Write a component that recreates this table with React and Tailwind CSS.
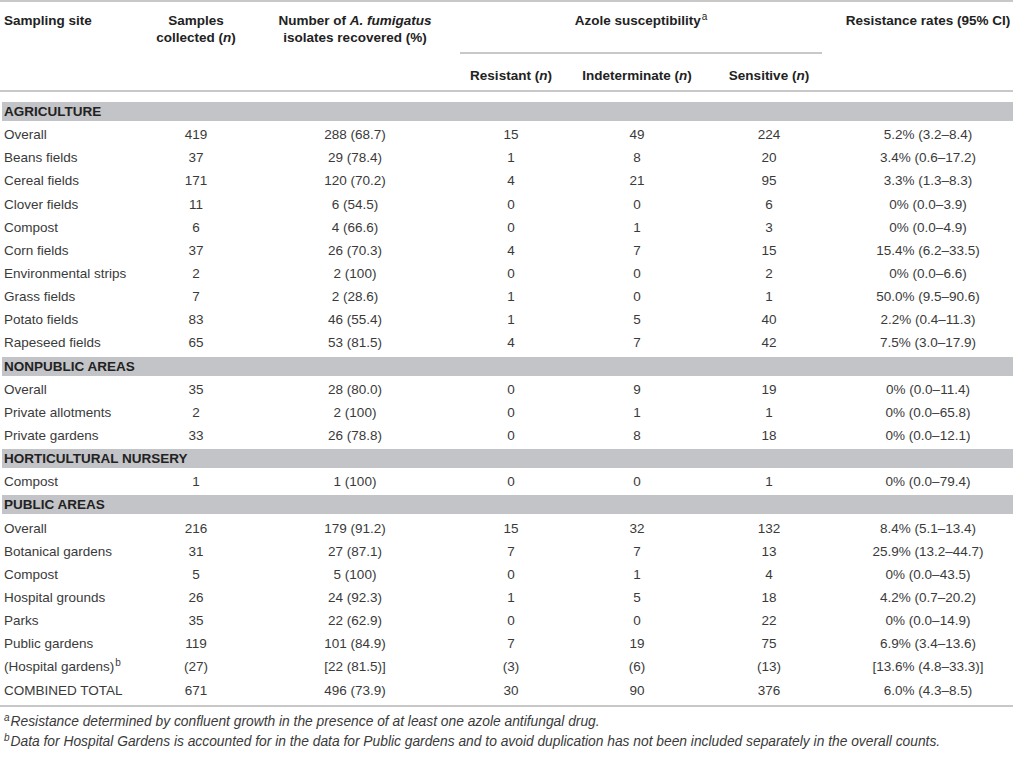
const COLS = 'grid grid-cols-[150px_92px_226px_86px_166px_98px_195px]';

const SECTIONS = [
  {
    title: 'AGRICULTURE',
    rows: [
      ['Overall', '419', '288 (68.7)', '15', '49', '224', '5.2% (3.2–8.4)'],
      ['Beans fields', '37', '29 (78.4)', '1', '8', '20', '3.4% (0.6–17.2)'],
      ['Cereal fields', '171', '120 (70.2)', '4', '21', '95', '3.3% (1.3–8.3)'],
      ['Clover fields', '11', '6 (54.5)', '0', '0', '6', '0% (0.0–3.9)'],
      ['Compost', '6', '4 (66.6)', '0', '1', '3', '0% (0.0–4.9)'],
      ['Corn fields', '37', '26 (70.3)', '4', '7', '15', '15.4% (6.2–33.5)'],
      ['Environmental strips', '2', '2 (100)', '0', '0', '2', '0% (0.0–6.6)'],
      ['Grass fields', '7', '2 (28.6)', '1', '0', '1', '50.0% (9.5–90.6)'],
      ['Potato fields', '83', '46 (55.4)', '1', '5', '40', '2.2% (0.4–11.3)'],
      ['Rapeseed fields', '65', '53 (81.5)', '4', '7', '42', '7.5% (3.0–17.9)'],
    ],
  },
  {
    title: 'NONPUBLIC AREAS',
    rows: [
      ['Overall', '35', '28 (80.0)', '0', '9', '19', '0% (0.0–11.4)'],
      ['Private allotments', '2', '2 (100)', '0', '1', '1', '0% (0.0–65.8)'],
      ['Private gardens', '33', '26 (78.8)', '0', '8', '18', '0% (0.0–12.1)'],
    ],
  },
  {
    title: 'HORTICULTURAL NURSERY',
    rows: [['Compost', '1', '1 (100)', '0', '0', '1', '0% (0.0–79.4)']],
  },
  {
    title: 'PUBLIC AREAS',
    rows: [
      ['Overall', '216', '179 (91.2)', '15', '32', '132', '8.4% (5.1–13.4)'],
      ['Botanical gardens', '31', '27 (87.1)', '7', '7', '13', '25.9% (13.2–44.7)'],
      ['Compost', '5', '5 (100)', '0', '1', '4', '0% (0.0–43.5)'],
      ['Hospital grounds', '26', '24 (92.3)', '1', '5', '18', '4.2% (0.7–20.2)'],
      ['Parks', '35', '22 (62.9)', '0', '0', '22', '0% (0.0–14.9)'],
      ['Public gardens', '119', '101 (84.9)', '7', '19', '75', '6.9% (3.4–13.6)'],
      ['(Hospital gardens)', '(27)', '[22 (81.5)]', '(3)', '(6)', '(13)', '[13.6% (4.8–33.3)]', 'b'],
      ['COMBINED TOTAL', '671', '496 (73.9)', '30', '90', '376', '6.0% (4.3–8.5)'],
    ],
  },
];

function DataRow({ row }) {
  const [site, samples, recovered, res, ind, sens, rate, sup] = row;
  return (
    <div className={`${COLS} h-[23.15px] items-center text-[#3a3a3a]`}>
      <div className="pl-[4px] whitespace-nowrap">
        {site}
        {sup && <sup className="text-[10px] ml-[1px]">{sup}</sup>}
      </div>
      <div className="text-center">{samples}</div>
      <div className="text-center">{recovered}</div>
      <div className="text-center">{res}</div>
      <div className="text-center">{ind}</div>
      <div className="text-center">{sens}</div>
      <div className="text-center pl-[25px]">{rate}</div>
    </div>
  );
}

function Band({ title }) {
  return (
    <div className="h-[23.15px] flex items-center">
      <div className="h-[19px] w-full ml-[2px] bg-[#c3c4c7] flex items-center pl-[2px] font-bold text-[#222]">
        {title}
      </div>
    </div>
  );
}

export default function App() {
  return (
    <div className="w-[1013px] bg-white font-['Liberation_Sans',Arial,sans-serif] text-[13.5px] leading-[17px]">
      {/* Header */}
      <div className="border-t-2 border-[#c8c8c8]" />
      <div className={`${COLS} grid-rows-[52px_36px] font-bold text-[#222]`}>
        <div className="row-span-2 pl-[4px] pt-[10px]">Sampling site</div>
        <div className="row-span-2 text-center pt-[10px]">
          Samples
          <br />
          collected (<i>n</i>)
        </div>
        <div className="row-span-2 text-center pt-[10px]">
          Number of <i>A. fumigatus</i>
          <br />
          isolates recovered (%)
        </div>
        <div className="col-span-3 ml-[-8px] mr-[-4px] text-center pt-[10px] border-b-2 border-[#c8c8c8]">
          Azole susceptibility<sup className="text-[10px] font-normal ml-[1px]">a</sup>
        </div>
        <div className="row-span-2 text-center pl-[25px] pt-[10px]">Resistance rates (95% CI)</div>
        <div className="text-center pt-[13px]">Resistant (<i>n</i>)</div>
        <div className="text-center pt-[13px]">Indeterminate (<i>n</i>)</div>
        <div className="text-center pt-[13px]">Sensitive (<i>n</i>)</div>
      </div>
      <div className="border-t-2 border-[#c8c8c8]" />

      {/* Body */}
      <div className="pt-[8px] pb-[3px]">
        {SECTIONS.map((s) => (
          <div key={s.title}>
            <Band title={s.title} />
            {s.rows.map((r, i) => (
              <DataRow key={i} row={r} />
            ))}
          </div>
        ))}
      </div>
      <div className="border-t-2 border-[#c8c8c8]" />

      {/* Footnotes */}
      <div className="pt-[5px] pl-[4px] italic text-[13.8px] leading-[20px] text-[#3a3a3a]">
        <p>
          <sup className="text-[10px] mr-[1px]">a</sup>Resistance determined by confluent growth in the presence of at least one azole antifungal drug.
        </p>
        <p>
          <sup className="text-[10px] mr-[1px]">b</sup>Data for Hospital Gardens is accounted for in the data for Public gardens and to avoid duplication has not been included separately in the overall counts.
        </p>
      </div>
    </div>
  );
}
